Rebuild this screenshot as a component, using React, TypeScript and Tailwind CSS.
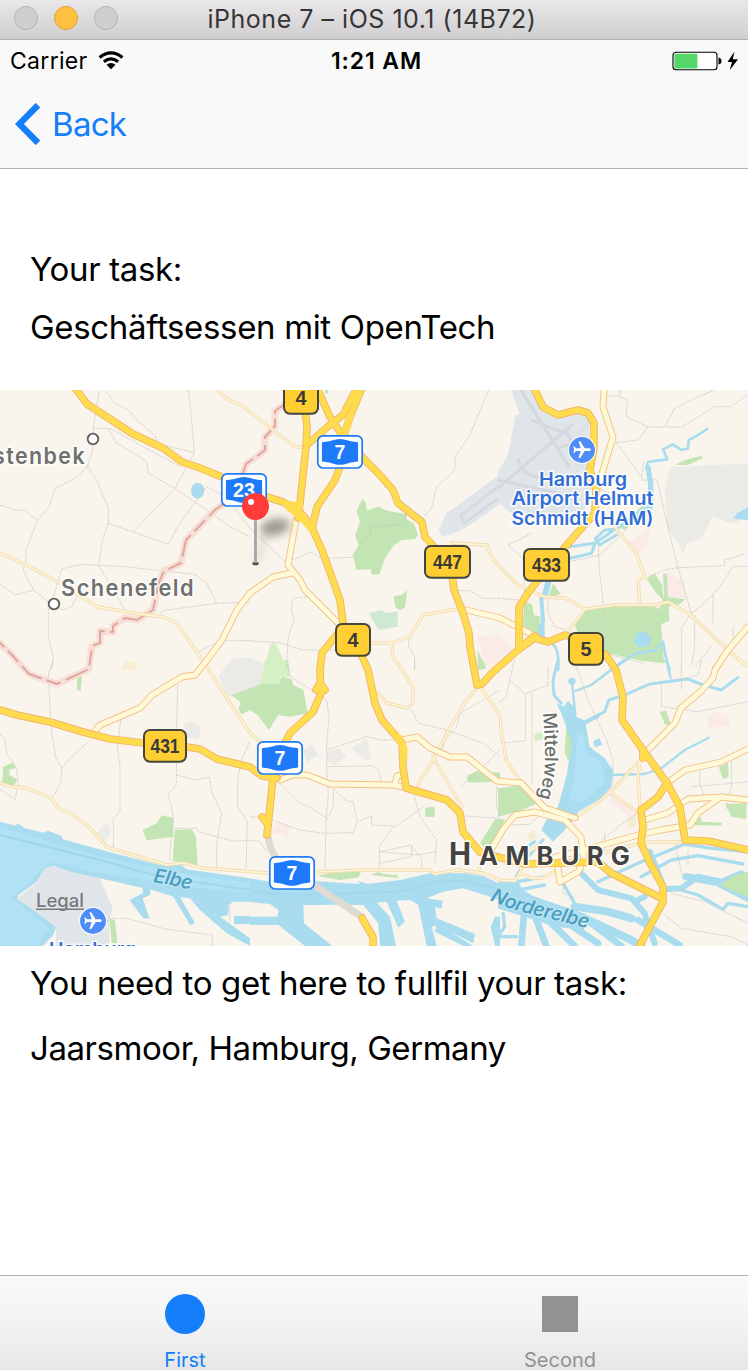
import React from "react";
import { MdFlight } from "react-icons/md";

type XY = { x: number; y: number };

/* Six map tiles, each drawn in its own coordinates at a third of the size. */
function Tile({ x, y, children }: XY & { children: React.ReactNode }) {
  return <g transform={`translate(${x} ${y}) scale(0.33333)`}>{children}</g>;
}

const GREEN = "#c3e5b4";
const WATER = "#a9dcef";
const GREY = "#eaeae6";
const PINK = "#fbebe8";

const lanes = [
  "M0 553L30 567L58 582L98 607L133 613L163 617L177 623L207 667L230 703L250 733L265 746",
  "M218 390L228 400L241 405L250 412L295 447L305 447",
  "M370 643L392 643L410 637L423 615L463 608",
  "M391 643L393 657L402 670L413 687L413 703L407 708L387 703L377 692",
  "M452 543L487 545L492 558L500 567L518 585L545 597L565 598L585 609L615 605L655 605L668 602L688 613L728 650L748 667",
  "M585 609L568 632",
  "M613 523L617 530L636 553L645 577L638 580L640 605",
  "M0 783L12 787L27 788L52 799L58 808L72 814L90 828L107 847L167 865L183 863L203 868L267 873L317 872L363 870L430 870L435 874L457 870L483 873L500 880L515 881L520 873L531 878L543 878L560 868",
  "M477 687L462 707L450 727L435 757L428 769L420 780L417 790",
  "M433 757L462 807",
  "M480 687L500 715L501 730L506 760L521 782",
  "M641 760L610 792L595 805L576 817",
  "M610 792L641 815",
  "M641 760L638 773L640 807",
  "M588 857L645 842L685 842",
  "M738 660L748 665",
  "M478 871L488 848",
  "M520 873L526 853L540 845",
];

const creams = [
  "M296 520L288 565L300 580L305 590L337 622",
  "M292 573L273 577L250 593L237 610L222 640L207 660L195 675L182 677L152 695L140 708L100 725L93 733",
  "M604 390L603 407L613 437L598 487",
  "M462 609L500 618L535 636",
  "M748 627L728 650L715 670L713 678L700 692L681 708L675 723L646 752",
  "M667 783L685 770L721 762L748 749",
  "M645 820L668 813L688 799L721 797L748 800",
  "M721 797L698 813L690 825L661 830L638 835L585 850L555 857",
  "M402 740L417 737L430 748L450 757L467 757L497 781L521 783L545 808L575 818",
  "M492 848L504 828L515 815L535 812L565 820L581 837L584 860L578 872L560 882L558 868",
  "M280 780L293 775L307 775L330 784L393 785L404 787M395 784L397 776L403 775",
];

const yellows = [
  "M75 388L87 404L110 419L133 434L163 448L182 462L200 468L222 477L267 497L283 502L300 512L313 528",
  "M305 410L307 427L306 447L300 503L298 518",
  "M362 388L350 417L345 432L340 467L335 480L317 507L312 528L322 550L340 600L343 623L355 640L368 670L375 703L382 720L402 743L403 767L406 788L447 800L460 813L463 832L480 852L498 857L525 864L598 862L611 873L661 898",
  "M317 388L330 417L340 432",
  "M357 388L343 415L332 423L307 445",
  "M355 450L378 473L393 490L398 503L422 522L425 537L437 550L452 575L454 590L463 613L469 633L470 647L477 685L482 684L493 672L518 650L535 638L548 642L565 635L585 642L606 655L616 670L623 697L622 720L645 753L667 783L680 807L685 840L708 841L748 850",
  "M534 388L543 407L558 415L578 410L588 413L594 423L594 447L590 470L596 490L595 513L565 547L538 580L528 593L519 607L519 648L535 636",
  "M667 783L658 797L641 810L643 827L641 843L650 863L663 887L663 902L641 943L638 950",
  "M0 710L17 715L50 722L83 732L110 739L143 743L187 747L200 749L217 759L250 767L262 776L277 778",
  "M343 628L334 638L322 653L320 670L321 693L313 712L290 733L278 756L273 777L270 807L267 835",
  "M316 690L320 683L325 690M262 817L268 825",
  "M362 918L373 937L373 950",
  "M531 640L533 637M643 750L643 758",
];

function Roads() {
  return (
    <g fill="none" strokeLinecap="round" strokeLinejoin="round">
      {lanes.map((d) => <path key={d} d={d} stroke="#f3dcae" strokeWidth="3.4" />)}
      {lanes.map((d) => <path key={d} d={d} stroke="#fdf5dc" strokeWidth="1.5" />)}
      {creams.map((d) => <path key={d} d={d} stroke="#f4c286" strokeWidth="6.9" />)}
      {creams.map((d) => <path key={d} d={d} stroke="#fef9d8" strokeWidth="5" />)}
      <path d="M268 836Q270 855 285 867L317 887L362 917" stroke="#dddbd3" strokeWidth="7" />
      {yellows.map((d) => <path key={d} d={d} stroke="#f3b36b" strokeWidth="7.6" />)}
      {yellows.map((d) => <path key={d} d={d} stroke="#ffdc4e" strokeWidth="5.8" />)}
      <path d="M287 504L300 506M288 507L302 518L312 530" stroke="#ffdc4e" strokeWidth="6.4" />
      <path d="M346 430L350 416M398 737L404 748L404 757" stroke="#ffdc4e" strokeWidth="7" />
    </g>
  );
}

function Land() {
  return (
    <>
      <Tile x={0} y={380}>
        <ellipse cx="593" cy="332" rx="20" ry="24" fill={WATER} />
        <path d="M370 846h36v24h-38z" fill="#f8efd2" />
        <path d="M668 870L700 835L745 832L830 870z" fill={GREY} />
      </Tile>
      <Tile x={250} y={380}>
        <path d="M338 355L348 372L350 392L385 380L412 392L468 402L470 418L492 430L504 465L495 478L455 480L432 495L405 535L388 583L366 584L362 568L320 570L308 525L326 496L315 468L330 425L320 392Z" fill={GREEN} />
        <path d="M362 442L462 432L470 402M330 490L360 465L362 442" stroke="#bcd0ae" strokeWidth="2" fill="none" />
        <path d="M431 648L455 645L472 631L465 683L450 690L436 682Z" fill={GREEN} />
        <path d="M356 700L396 690L407 700L443 694V740L386 750Z" fill="#cfe8d2" />
        <path d="M225 30h10v10h-10z" fill={GREEN} />
        <path d="M42 870L62 790L76 790L98 835L112 870Z" fill="#d4f0c4" />
        <path d="M680 768L750 765V840L708 858Z" fill={PINK} />
        <path d="M682 808L708 866L684 870Z" fill={GREEN} />
        <path d="M750 283L590 400L566 450L575 468L600 466L660 435L750 372Z" fill="#e0e5e9" />
        <path d="M750 315L632 408L642 430L750 352" stroke="#d5dade" strokeWidth="8" fill="none" />
      </Tile>
      <Tile x={498} y={380}>
        <path d="M40 30H105L140 90L180 112L245 95L275 110V260L280 330L260 390L200 400L60 420L0 365V275L30 225L52 105L65 103Z" fill="#e0e5e9" />
        <g stroke="#d3d9de" strokeWidth="9" fill="none">
          <path d="M68 30L215 262M0 325L225 132M0 300L205 345M60 235Q70 290 130 292M100 120L200 160M178 205L225 190L205 155" />
        </g>
        <path d="M518 262L750 250V405L705 432L644 408L612 476L566 490L555 520L540 490L508 445L500 330Z" fill={GREY} />
        <path d="M750 382L718 400L705 416L750 420Z" fill={WATER} />
        <path d="M532 255L560 241L612 227L614 235L570 255Z" fill={GREEN} />
        <path d="M392 485L458 448L450 490L420 530L405 510Z" fill={PINK} />
        <path d="M412 400L428 378L440 375L430 410L380 450L360 440Z" fill={GREEN} />
        <path d="M505 573L560 605L563 655L505 655Z" fill={PINK} />
        <path d="M446 598L470 580L492 615L498 662L475 640Z" fill={GREEN} />
        <path d="M495 582L507 580L514 722L484 735L482 690L498 650L563 658L540 676L500 680Z" fill={GREEN} />
        <path d="M263 690L350 677H468L486 690L498 850L430 842L320 818L240 760L230 735Z" fill={GREEN} />
        <path d="M78 665L102 672L108 705L128 710L120 770L100 765L75 735Z" fill={GREEN} />
        <path d="M165 610L188 642L150 655Z" fill={GREEN} />
        <path d="M0 765L45 808L0 838Z" fill={PINK} />
        <g fill="none" stroke={WATER} strokeLinecap="round" strokeLinejoin="round">
          <path strokeWidth="8" d="M628 147L592 170L572 180L570 205L550 210L525 193L495 208L508 238L450 246L446 262" />
          <path strokeWidth="16" d="M450 262L458 310L458 380L400 412" />
          <path strokeWidth="9" d="M458 380L370 435L290 490L215 500M360 448L320 450L292 476L305 495L355 465M290 495L280 520L205 538M205 540L145 610L135 650" />
          <path strokeWidth="12" d="M155 605L145 640L130 655L135 720L130 765" />
          <path strokeWidth="8" d="M150 780Q188 800 180 870M362 855L410 820L470 812L495 785L503 830L515 870" />
        </g>
        <path d="M415 760L440 753L460 775L455 795L425 804L408 785Z" fill={WATER} />
        <path d="M122 730L140 740V775L118 770Z" fill={WATER} />
      </Tile>
      <Tile x={0} y={660}>
        <path d="M370 5h36v27l-38-4z" fill="#f8efd2" />
        <path d="M233 40L248 30L242 92L230 90Z" fill={GREEN} />
        <path d="M657 45L700 0H750V95L690 112L675 100Z" fill={GREY} />
        <path d="M695 105L750 85V150L725 163L715 148L722 128Z" fill={GREEN} />
        <path d="M550 190L575 184L603 205L595 238L560 235Z" fill={GREY} />
        <path d="M10 320L38 308L48 325L28 328L28 345L52 358L40 380L6 370Z" fill={GREEN} />
        <path d="M292 518L315 488L333 500L330 525L310 548Z" fill={GREY} />
        <path d="M428 510L470 490L485 466L520 474V530L440 541Z" fill={GREEN} />
        <path d="M524 510L575 508L588 530L593 616L518 603Z" fill={GREEN} />
        <path d="M0 485L48 497L52 490L75 505L130 518L145 512L185 528L188 538L330 577L480 615L540 612L560 628L750 655V725L700 725L686 735L685 765L660 770L750 835V858L680 820L600 750L570 715L540 712L585 790L570 795L520 710L452 688L450 705L428 715L448 776L430 775L388 720L428 700V684L300 655L215 638L162 618L135 625L110 665L55 705L52 718L100 748L168 802L160 825L128 858H0Z" fill={WATER} />
        <path d="M0 500L300 590L600 650L750 668V700L560 680L300 640L160 607L125 625L95 665L35 712L150 805L110 858H0Z" fill="#b0e1f4" />
        <path d="M0 525L300 600L480 650L750 690" fill="none" stroke="#a2d6eb" strokeWidth="6" />
        <path d="M702 768H750V792H702Z" fill={WATER} />
        <path d="M52 715L110 668L135 625L162 617L215 636L300 655L338 745L320 800L326 858H168V802Z" fill="#e0e5e9" />
        <path d="M328 776L345 780L352 850H335Z" fill={GREEN} />
      </Tile>
      <Tile x={250} y={660}>
        <path d="M0 10L40 12L32 75L0 90Z" fill={GREY} />
        <path d="M45 0H115L122 50L90 48L85 72H32Z" fill="#d4f0c4" />
        <path d="M0 85L32 72H85L95 48L125 58L130 75L160 90L173 160L120 170L85 165L57 210L25 168L0 150Z" fill={GREEN} />
        <path d="M160 270L185 253L205 285L170 307Z M230 275L270 266L288 290L250 315L232 305Z M305 265L350 235L363 298L345 300Z" fill={GREY} />
        <path d="M525 443L553 440L555 472L526 470Z" fill={GREEN} />
        <path d="M650 348L680 333L750 338V365L655 368Z" fill={GREEN} />
        <path d="M685 0H700L708 22L690 30Z" fill={GREEN} />
        <path d="M68 500L95 488L120 500L115 538L90 525L62 520Z" fill={PINK} />
        <path d="M203 648L240 638L335 632L325 652L270 660L240 655Z M362 645L385 636L400 642L443 645V654Z" fill={GREEN} />
        <path d="M735 478H765L735 540L710 570L690 550Z" fill={GREEN} />
        <path d="M0 655L60 665L120 670L200 664L330 672L325 662L352 672L450 660L540 640L650 640L700 648L750 672V720L640 685L580 695L530 715L578 722L575 745L555 742L560 775L675 822L670 850L560 795L545 800L560 858H530L505 735L480 720L440 722L465 785L445 803L410 725L380 728L420 770L438 858H390L385 790L340 735L250 734L160 736L162 790L247 858H165L85 795H0V770H82L85 750L60 732L0 726Z" fill={WATER} />
        <path d="M0 695L150 705L300 700L450 695L560 665L650 662L750 690" fill="none" stroke="#a2d6eb" strokeWidth="5" />
        <path d="M560 790L670 858H640L555 815Z M722 800L735 770H750V858H735Z" fill={WATER} />
      </Tile>
      <Tile x={498} y={660}>
        <path d="M455 0H505V10Z" fill={GREEN} />
        <path d="M0 385L75 375L118 430L60 455L0 470Z M0 480H20L0 510Z" fill={GREEN} />
        <path d="M190 150L210 160L225 235L215 310L200 280L205 200Z" fill={GREEN} />
        <path d="M108 225L128 215L140 235L112 245Z" fill="#d4f0c4" />
        <path d="M485 155L505 152L518 192L502 196Z M662 320L690 310L692 350L675 358Z M682 432L745 430V478L700 470Z M590 478L608 470L612 485L672 488L670 497L588 495Z" fill={GREEN} />
        <path d="M628 168L655 155L698 175L695 198L632 203Z M340 402L405 455L390 470L335 425Z" fill={PINK} />
        <path d="M390 470L415 458V495L400 508L388 495Z M90 520L110 512L118 530L95 545Z" fill="#f6ecd2" />
        <path d="M175 130L198 140L210 122L228 140L235 170L262 182L265 205L275 260L320 295L345 330L340 380L310 415L240 455L232 475L205 505L165 545L130 510L145 480L180 440L205 350L222 250L190 160Z" fill={WATER} />
        <path d="M238 220L255 220L266 275L312 310L322 370L250 430L215 420L232 330Z" fill="#b1e1f4" />
        <path d="M285 243L305 235L313 255L290 262Z" fill={WATER} />
        <circle cx="222" cy="64" r="11" fill={WATER} />
        <g fill="none" stroke={WATER} strokeLinecap="round" strokeLinejoin="round">
          <path strokeWidth="7" d="M222 70L232 165M232 93L280 75L378 0M345 345L440 342L490 325L560 270L633 233M505 0L518 55" />
          <path strokeWidth="9" d="M180 0L165 60L168 105L190 130M262 185L320 155L332 120L380 105L455 72L570 57L615 75L670 90L720 52M262 188L300 170" />
          <path strokeWidth="10" d="M135 540L90 590L55 650M110 545L60 580M300 665L420 610L560 552L640 565L750 575M430 650L520 600L600 587L735 612" />
          <path strokeWidth="18" d="M250 640L300 690L400 715L440 760L470 850M455 575L500 688L550 685L600 650L670 665L730 640M440 710L410 725" />
          <path strokeWidth="10" d="M550 690L600 705L675 748L690 730L750 740M195 670L230 730M60 665L140 650M65 690L140 675M15 760L20 800L0 830" />
          <path strokeWidth="22" d="M565 650L660 668L750 715" />
          <path strokeWidth="24" d="M0 690L75 710L250 770L390 835L430 858M230 740L330 755L400 775" />
          <path strokeWidth="20" d="M80 740L70 858M115 780L145 858M150 780L230 858M180 770L300 850M280 790L370 858M420 780L545 855" />
        </g>
        <path d="M0 665H60L75 690L160 740L240 760L260 810L170 800L110 780L0 745Z" fill={WATER} />
        <path d="M665 675L710 645L750 635V712Z" fill={GREEN} />
        <path d="M0 830H60" stroke={WATER} strokeWidth="10" />
      </Tile>
    </>
  );
}

function Streets() {
  const style = { fill: "none", stroke: "#cfcdc7", strokeWidth: 2.4, strokeDasharray: "9 2" };
  return (
    <>
      <Tile x={0} y={380}>
        <path {...style} d="M297 35L280 145L278 215L262 260L225 295L165 325L148 380L112 422L78 510V540L70 570L100 630L145 665V770L160 830L155 870M280 145H325L345 185L440 245L445 280L525 325L598 375L690 440L750 470M320 35L345 70L385 90L410 120L468 170V190L583 218M565 30L575 120L583 218L525 325L400 455M262 260L290 300L325 385V430L505 493L535 437L620 320L665 345M325 430L310 470L295 555L375 690M0 375L45 390H75L112 422M185 567L245 553L375 560L585 583L620 610L650 670L750 667M185 567L160 650M0 612L45 645L100 630M650 670L500 690L480 700M145 665L190 690L215 680L230 650M595 815L660 782H750M330 145L430 200L540 260M705 385L750 445" />
      </Tile>
      <Tile x={250} y={380}>
        <path {...style} d="M716 30L660 165L615 230V270L560 320L545 385L518 415M0 445L105 545L155 530L180 515L215 535L310 532M170 650L128 655L125 690L133 720L115 770L108 870M0 783L90 788L160 810H250M625 632H660L700 655H750M476 775V800L494 830V870" />
      </Tile>
      <Tile x={498} y={380}>
        <path {...style} d="M325 48H362L388 60L385 110L450 140L420 180L352 188M450 140L500 142L530 85L580 60L650 30M365 30V48M505 140L550 142L650 80H700L748 45M355 188L430 290M390 355L305 330M437 245L430 300H478L500 400L540 563L580 700M300 485L305 580L325 740L320 800M740 522L680 540V557L540 563L500 570L450 590M750 560L705 558L680 600L640 650L575 705L550 745V860M645 645V730M590 705V800L580 860M705 740V780L690 810M30 495L75 535L80 640M100 460L30 495M215 545L305 525L385 450M325 822L440 850M150 650V700L170 740L205 750M0 655L60 660M240 160L285 120M640 800L590 860" />
      </Tile>
      <Tile x={0} y={660}>
        <path {...style} d="M160 0L145 40L153 205L168 295L185 325L182 370L155 418M268 243L205 300L185 325M362 180L352 260L360 320V455L340 475V565M533 75L530 205L529 375L505 400L520 470L510 570V605M529 345L585 360L628 352L635 395L665 460L650 550V625M0 222L15 238L20 280L50 325L55 375L45 418L0 388M590 508L600 517L700 543L750 542M520 505H590M750 245L722 305L713 360V440L742 485L738 625M325 775H380L500 808L637 825V858M690 728V785M325 780V850" />
      </Tile>
      <Tile x={250} y={660}>
        <path {...style} d="M110 0L120 50L190 93L230 120L237 170L230 255V330L235 400L228 480L225 635M232 270L350 230L395 240H450M230 320L370 318L385 330L395 370M250 385V440L230 480M90 370L150 430L180 442L230 475M250 385L285 420L310 427L322 485L365 468V495L440 498L520 440M0 470L50 475L150 510L225 520L310 518L322 485M485 380L510 470L560 540L555 610M388 627V560L430 500M388 575L500 585L560 575M388 610L485 590V555L390 575M485 560L515 595V625M485 150L505 190L590 210L700 250L750 290M590 210L575 280M750 90L630 160L620 200L560 275M630 380L700 320L750 270M645 468L750 475M740 380V440L750 470M0 540L30 545L50 575M494 0V30" />
      </Tile>
      <Tile x={498} y={660}>
        <path {...style} d="M50 0L35 60L82 102V242L10 250M102 100V370M82 102L150 75V20M35 60L25 110L0 130M232 10L270 120L325 240L345 300V390M490 70V140L600 155L750 125M610 0L600 45L540 60M550 20V90M605 335V370L620 410M700 305V380L685 450M580 380L680 372L750 365M530 540L555 660M195 670V700L230 712M520 700L620 725L750 790M500 765L550 805L700 830L750 855M320 520V570M20 495L95 493L150 440M310 540L415 460M570 570V620" />
      </Tile>
    </>
  );
}

const border = "M285 404L275 411V426L265 437V450L256 457L246 464L240 482L222 505L215 510L186 540L181 563L164 571L159 582L153 610L137 620L125 618L113 626L113 632L100 631V643L92 646L89 669L57 684L29 674L12 655L-2 641";

function Boundary() {
  return (
    <g fill="none" strokeLinejoin="round">
      <path d={border} stroke="#f7dfd8" strokeWidth="7" />
      <path d={border} stroke="#dfa79d" strokeWidth="2" strokeDasharray="15 5 24 6" />
    </g>
  );
}

function Badge({ x, y, w, label }: XY & { w: number; label: string }) {
  return (
    <g transform={`translate(${x} ${y})`}>
      <rect x="1" y="1" width={w - 2} height="31.8" rx="6" fill="#ffce32" stroke="#45453f" strokeWidth="2" />
      <text x={w / 2} y="23.9" textAnchor="middle" fontFamily="Liberation Sans, sans-serif" fontSize="20" fontWeight="700" fill="#3a3a36" textLength={label.length === 3 ? 29 : 11} lengthAdjust="spacingAndGlyphs">{label}</text>
    </g>
  );
}

function Motorway({ x, y, label }: XY & { label: string }) {
  return (
    <g transform={`translate(${x} ${y})`}>
      <rect x="0.8" y="0.8" width="44.4" height="32.2" rx="5.5" fill="#fff" stroke="#1f7af5" strokeWidth="1.7" />
      <path d="M4.9 7.2Q12 6.6 19 4.5Q23 3.6 27 4.5Q34 6.6 41.1 7.2V26.6Q34 27.2 27 29.4Q23 30.3 19 29.4Q12 27.2 4.9 26.6Z" fill="#1f7af9" />
      <text x="23" y="23.8" textAnchor="middle" fontFamily="Liberation Sans, sans-serif" fontSize="20" fontWeight="700" fill="#fff" textLength={label.length === 2 ? 22 : 10.8} lengthAdjust="spacingAndGlyphs">{label}</text>
    </g>
  );
}

function Airport({ x, y }: XY) {
  return (
    <g transform={`translate(${x} ${y})`}>
      <circle r="14" fill="#fff" opacity="0.8" />
      <circle r="12.9" fill="#4e8cf8" />
      <g transform="rotate(90)"><MdFlight x={-10.5} y={-10.5} size={21} color="#fff" /></g>
    </g>
  );
}

function Town({ x, y }: XY) {
  return <circle cx={x} cy={y} r="5.3" fill="#fff" stroke="#5f5f5c" strokeWidth="1.8" />;
}

function MapView() {
  const halo = { stroke: "#fff", strokeWidth: 3.2, strokeOpacity: 0.85, paintOrder: "stroke", strokeLinejoin: "round" as const };
  const spread = "spacingAndGlyphs";
  return (
    <svg className="block h-[556px] w-[748px] shrink-0 bg-[#f9f5ed]" viewBox="0 390 748 556" fontFamily="Inter, sans-serif">
      <defs>
        <filter id="pinShadow" x="-50%" y="-50%" width="200%" height="200%"><feGaussianBlur stdDeviation="4" /></filter>
        <path id="elbe" d="M153 882Q172 885 196 891" />
        <path id="norder" d="M490 900Q508 909 530 914T594 930" />
        <path id="mittelweg" d="M543 713Q545 735 545 757T537 804" />
      </defs>
      <Land />
      <Streets />
      <Boundary />
      <Roads />

      <Town x={93} y={439} />
      <Town x={54} y={604} />
      <g fill="#70706f" fontWeight="600" {...halo}>
        <text x="-7" y="464" fontSize="22.5" textLength="93" lengthAdjust={spread} letterSpacing="1.5">stenbek</text>
        <text x="61" y="596" fontSize="22.5" textLength="134" lengthAdjust={spread} letterSpacing="1.5">Schenefeld</text>
      </g>
      <text x="36" y="907" fontSize="18" fontWeight="500" fill="#77797b" textLength="48" lengthAdjust={spread}>Legal</text>
      <path d="M36 909.2H84" stroke="#77797b" strokeWidth="1.5" />
      <g fill="#316fd6" fontWeight="600" fontSize="18.5" {...halo}>
        <text x="539" y="485.5" textLength="88" lengthAdjust={spread}>Hamburg</text>
        <text x="511.5" y="505" textLength="142" lengthAdjust={spread}>Airport Helmut</text>
        <text x="511.5" y="525" textLength="142" lengthAdjust={spread}>Schmidt (HAM)</text>
        <text x="49" y="956" textLength="87" lengthAdjust={spread}>Hamburg</text>
      </g>
      <g fontSize="19.5" fontStyle="italic" fontWeight="600" fill="#4ba1c3" stroke="#cdeaf4" strokeWidth="2" strokeOpacity="0.8" paintOrder="stroke">
        <text textLength="39"><textPath href="#elbe" textLength="39">Elbe</textPath></text>
        <text textLength="102"><textPath href="#norder" textLength="102">Norderelbe</textPath></text>
      </g>
      <text fontSize="18.5" fontWeight="500" fill="#6d6d6b" {...halo} textLength="86"><textPath href="#mittelweg" textLength="86">Mittelweg</textPath></text>
      <g fill="#434341" fontWeight="700" {...halo}>
        <text x="449" y="865" fontSize="31" textLength="22" lengthAdjust={spread}>H</text>
        <text x="479" y="865" fontSize="25.5" textLength="155" letterSpacing="4">AMBURG</text>
      </g>

      <Badge x={283} y={381} w={36} label="4" />
      <Badge x={424} y={545} w={47} label="447" />
      <Badge x={523} y={548} w={47} label="433" />
      <Badge x={335} y={623} w={36} label="4" />
      <Badge x={568} y={632} w={36} label="5" />
      <Badge x={143} y={729} w={44} label="431" />
      <Motorway x={317} y={435} label="7" />
      <Motorway x={221} y={473} label="23" />
      <Motorway x={257} y={741} label="7" />
      <Motorway x={269} y={856} label="7" />
      <Airport x={582} y={450} />
      <Airport x={93} y={921} />

      <g filter="url(#pinShadow)">
        <ellipse cx="275" cy="527" rx="15" ry="8.5" fill="#55554a" opacity="0.55" transform="rotate(-12 275 527)" />
        <path d="M257 562L267 532" stroke="#77776c" strokeWidth="4" opacity="0.3" />
      </g>
      <ellipse cx="255.5" cy="563.5" rx="3.2" ry="1.8" fill="#4b4b4b" />
      <path d="M255.5 518V563" stroke="#a4a4aa" strokeWidth="2.8" />
      <circle cx="255.5" cy="506.5" r="13.5" fill="#ff3c39" />
      <circle cx="251" cy="502" r="3" fill="#fff" />
    </svg>
  );
}

function WindowTitle() {
  return (
    <header className="relative flex h-10 shrink-0 items-center justify-center border-b border-[#b1afb1] bg-linear-to-b from-[#e9e7e9] to-[#d0ced0]">
      <div className="absolute left-[14px] top-[6px] flex gap-4">
        <span className="size-6 rounded-full border border-[#b4b3b4] bg-[#cfcfcf]" />
        <span className="size-6 rounded-full border border-[#e0a13a] bg-[#ffbf3f]" />
        <span className="size-6 rounded-full border border-[#b4b3b4] bg-[#cfcfcf]" />
      </div>
      <h1 className="whitespace-nowrap pr-1 text-[25px] leading-none tracking-[0.52px] text-[#373437]">iPhone 7 – iOS 10.1 (14B72)</h1>
    </header>
  );
}

function NavBar() {
  return (
    <div className="flex h-[129px] shrink-0 flex-col border-b border-[#b2b2b2] bg-[#f9f9f9]">
      <div className="grid h-[42px] grid-cols-3 items-center pl-[10px] pr-[9px] text-[23px] leading-none">
        <div className="flex items-center gap-[10px]">
          <span className="tracking-[0.3px]">Carrier</span>
          <svg className="-mt-0.5" width="26" height="19" viewBox="0 0 26 19" fill="none" stroke="#000" strokeWidth="3.2">
            <path d="M1.6 6.4Q13 -2.8 24.4 6.4M5.9 10.7Q13 4.9 20.1 10.7" />
            <path d="M13 18.3L8.5 13.8Q13 10.3 17.5 13.8Z" fill="#000" stroke="none" />
          </svg>
        </div>
        <span className="whitespace-nowrap pl-1 text-center font-semibold tracking-[0.9px]">1:21 AM</span>
        <svg className="-mt-px justify-self-end" width="67" height="20" viewBox="0 0 67 20">
          <rect x="1" y="1.2" width="44" height="17.6" rx="3" fill="#fff" stroke="#000" strokeWidth="1.1" />
          <rect x="2.4" y="2.8" width="23" height="14.6" rx="1" fill="#53d769" />
          <path d="M46.5 6.5Q49.5 7 49.5 10T46.5 13.5Z" />
          <path d="M62.5 .5L55.5 11H60L57.7 19.3L66 8.2H60.8Z" />
        </svg>
      </div>
      <button className="flex h-[84px] items-center gap-[11px] pl-[15px] text-[33px] leading-none tracking-[-0.7px] text-[#157efb]">
        <svg width="26" height="42" viewBox="0 0 26 42" fill="none" stroke="#157efb" strokeWidth="6.4">
          <path d="M23 2.2L4.4 21L23 39.8" />
        </svg>
        <span>Back</span>
      </button>
    </div>
  );
}

export default function App() {
  return (
    <div className="flex h-[1370px] w-[748px] flex-col overflow-hidden bg-white font-[Inter,sans-serif] text-black">
      <WindowTitle />
      <NavBar />
      <section className="flex h-[221px] shrink-0 flex-col gap-[18px] pl-[30px] pt-[80px] text-[33px] leading-10 tracking-[-0.34px]">
        <p>Your task:</p>
        <p>Geschäftsessen mit OpenTech</p>
      </section>
      <MapView />
      <section className="flex grow flex-col gap-[25px] pl-[30px] pt-[17px] text-[33px] leading-10 tracking-[-0.37px]">
        <p>You need to get here to fullfil your task:</p>
        <p className="tracking-[-0.44px]">Jaarsmoor, Hamburg, Germany</p>
      </section>
      <nav className="flex h-[95px] shrink-0 border-t border-[#b0b0b0] bg-linear-to-b from-[#fafafa] via-[#f3f3f3] to-[#e6e6e6] text-[20px] leading-6">
        <div className="flex w-[370px] shrink-0 flex-col items-center pt-[18px] text-[#157efb]">
          <span className="size-10 shrink-0 rounded-full bg-[#157efb]" />
          <span className="mt-[14px] shrink-0">First</span>
        </div>
        <div className="flex w-[380px] shrink-0 flex-col items-center pt-5 text-[#929292]">
          <span className="size-9 shrink-0 bg-[#929292]" />
          <span className="mt-4 shrink-0">Second</span>
        </div>
      </nav>
    </div>
  );
}
